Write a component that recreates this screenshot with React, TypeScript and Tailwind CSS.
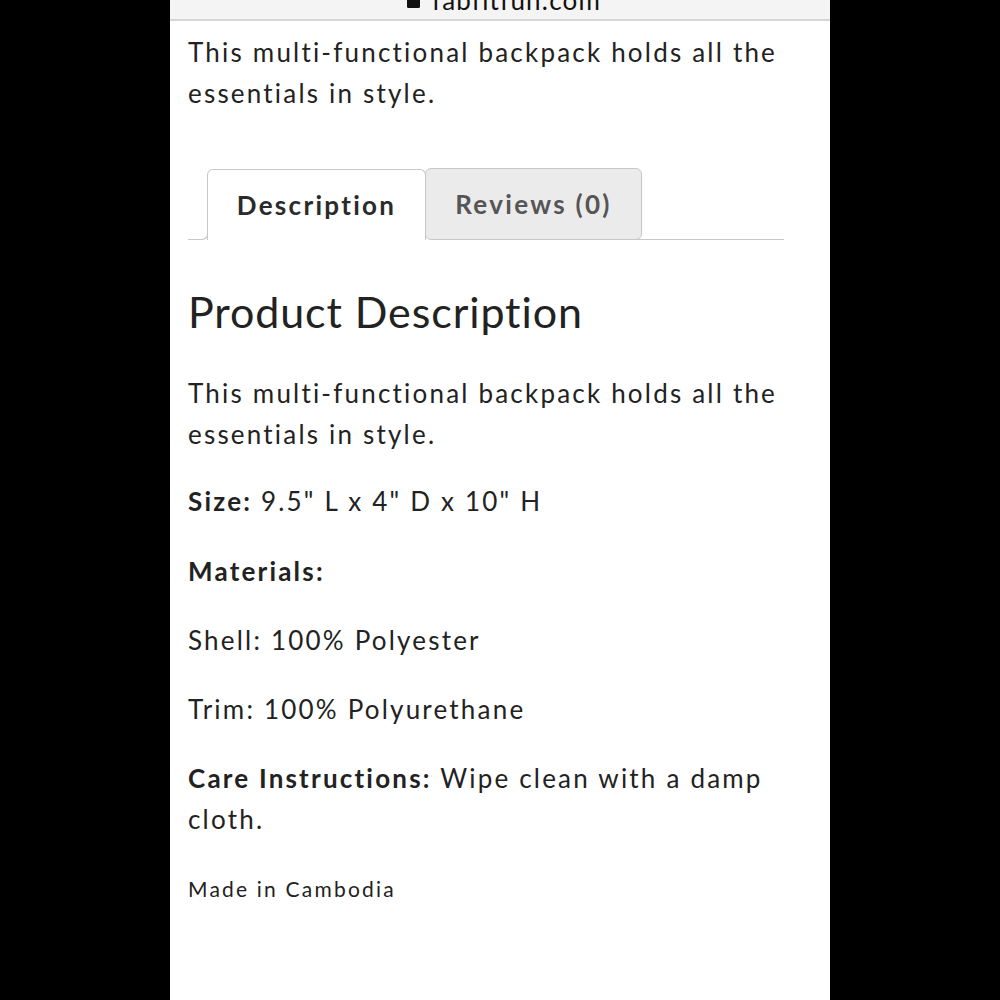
import React from 'react';

export default function App() {
  return (
    <div className="min-h-screen w-full bg-black flex justify-center" style={{ fontFamily: 'Lato, "Open Sans", sans-serif' }}>
      <div className="w-[660px] h-[1000px] bg-white overflow-hidden text-[#222]">
        {/* Browser address bar (cut off at top) */}
        <div className="h-[21px] bg-[#f4f4f4] border-b-2 border-[#d6d6d6] overflow-hidden flex justify-center">
          <div className="flex items-center gap-[12px] -mt-[20px] pl-[8px]">
            <svg width="13" height="16" viewBox="0 0 13 16">
              <rect x="0" y="6" width="13" height="10" rx="1.5" fill="#111" />
            </svg>
            <span className="text-[26px] leading-[30px] tracking-[1.2px] text-[#111]">fabfitfun.com</span>
          </div>
        </div>

        <div className="pl-[18px] pr-[46px]">
          <p className="text-[26px] leading-[41px] tracking-[2.2px] mt-[11px]">
            This multi-functional backpack holds all the essentials in style.
          </p>

          {/* Tabs */}
          <div className="flex items-end mt-[54px]">
            <div className="w-[20px] h-[8px] border-b border-r border-[#c8c8c8] rounded-br-[6px]" />
            <div className="w-[219px] h-[71px] border border-b-0 border-[#c8c8c8] rounded-t-[6px] flex items-center justify-center -ml-px">
              <span className="text-[26px] font-bold tracking-[2.3px] text-[#2a2a2a]">Description</span>
            </div>
            <div className="w-[217px] h-[72px] bg-[#ebebeb] border border-[#c8c8c8] rounded-[6px] flex items-center justify-center -ml-px">
              <span className="text-[26px] font-bold tracking-[2.3px] text-[#555]">Reviews (0)</span>
            </div>
            <div className="flex-1 h-[8px] border-b border-[#c8c8c8] -ml-[6px]" />
          </div>

          <h2 className="text-[43px] leading-[48px] tracking-[0.9px] mt-[48px]">Product Description</h2>

          <div className="text-[26px] leading-[41px] tracking-[2.2px]">
            <p className="mt-[37px]">This multi-functional backpack holds all the essentials in style.</p>
            <p className="mt-[26px]"><span className="font-bold">Size:</span> 9.5" L x 4" D x 10" H</p>
            <p className="mt-[29px] font-bold">Materials:</p>
            <p className="mt-[28px]">Shell: 100% Polyester</p>
            <p className="mt-[28px]">Trim: 100% Polyurethane</p>
            <p className="mt-[28px]"><span className="font-bold">Care Instructions:</span> Wipe clean with a damp cloth.</p>
            <p className="mt-[34px] text-[21px] leading-[30px] tracking-[2.2px]">Made in Cambodia</p>
          </div>
        </div>
      </div>
    </div>
  );
}
